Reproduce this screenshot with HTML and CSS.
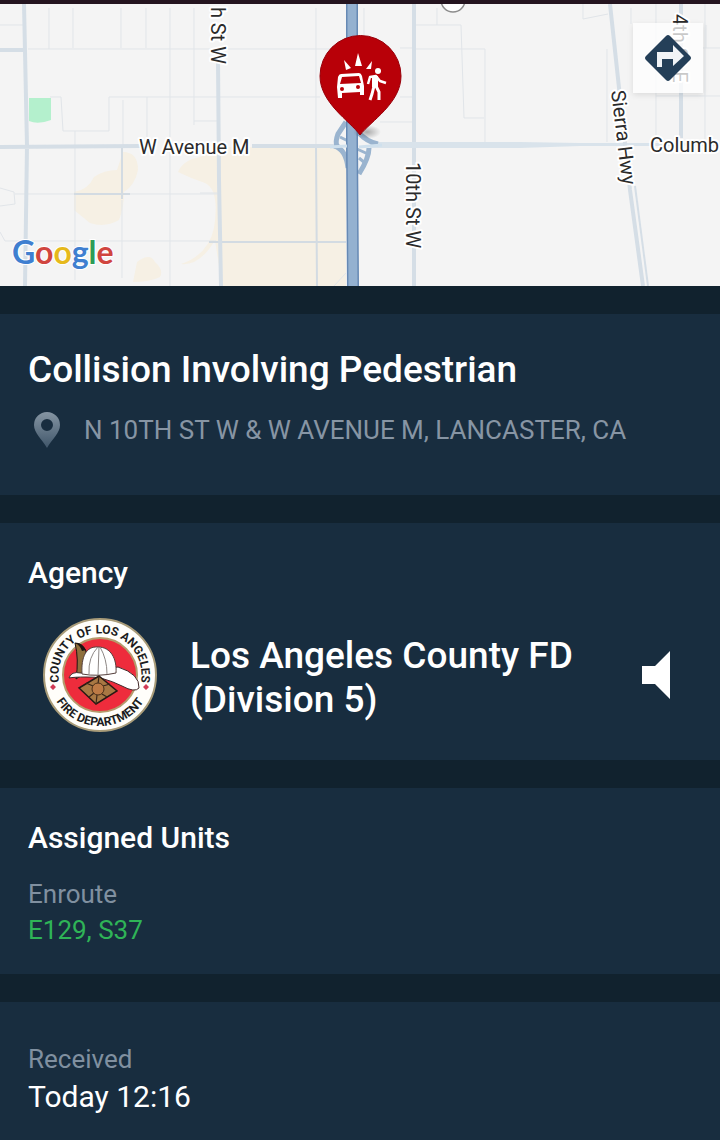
FILE: index.html
```
<!DOCTYPE html>
<html lang="en">
<head>
    <meta charset="UTF-8">
    <meta name="viewport" content="width=device-width, initial-scale=1.0">
    <title>Collision Involving Pedestrian</title>
    <link rel="stylesheet" href="styles.css">
</head>
<body>
    <div class="status-strip"></div>

    <div class="map">
        <svg class="map-canvas" viewBox="0 4 720 282" preserveAspectRatio="xMidYMid slice" role="img" aria-label="Map of the incident">
            <rect y="4" width="720" height="282" fill="#f4f4f4"/>

            <!-- Land areas -->
            <g fill="#f6f0e4">
                <path d="M218 147H341Q346 150 346 165V286H222L215 240Q200 266 181 264Q208 255 214 228Q220 190 205 183Q190 178 178 172Q183 160 200 157Z"/>
                <path d="M123 152Q138 152 138 170Q135 185 124 192Q124 208 119 220Q105 228 90 223L74 210V192Q88 190 94 177Q104 170 117 170Z"/>
                <path d="M137 262Q150 252 155 262Q164 270 160 277Q150 282 133 282Z"/>
            </g>
            <path d="M29 98H51V120Q38 125 29 121Z" fill="#b4f0cd"/>

            <!-- Minor roads -->
            <g fill="none" stroke="#e1e5e9" stroke-width="1">
                <path d="M0 25H24M28 49H346M49 8V49M73 8V48M121 8V48M146 8V48M170 8V286M194 8V125M50 97H61L63 131H109L109 97H320M123 100V146M147 97V145M194 121H218M75 131V280"/>
                <path d="M15 194H218M0 188L14 192L15 204L0 206M0 232L5 241H216M122 200V278M316 8V146M364 8V35M400 48H412M400 97H412M380 122H412M200 193H217M334 286L346 273"/>
                <path d="M415 25H461L464 118H484M415 49H485V142M437 8V25M583 4V19L608 14M607 49V142M631 8V24M656 4V142M705 4V142M703 48H720M656 96H720M706 25V48"/>
            </g>
            <g fill="none" stroke="#d3dbe2" stroke-width="2">
                <path d="M74 194H130M122 148V199M316 146L317 286M209 242H346"/>
            </g>

            <!-- Main roads -->
            <g fill="none" stroke="#d5dee6" stroke-width="4">
                <path d="M24 4L27 146L25 286M0 50H24M0 147L140 146M218 60L219 180L221 286M414 4V286M681 4V138M252 146H340"/>
                <path d="M370 142H520L580 143H720V146H580L520 148H370Z" fill="#d9e3eb" stroke="none"/>
                <path d="M610 4Q619 90 630 190L643 286"/>
                <path d="M635 186L648 286" stroke-width="2"/>
            </g>

            <!-- Freeway and interchange -->
            <g fill="none" stroke="#9ab4cf" stroke-width="5">
                <path d="M346 122L338 134Q335 142 337 146M334 146Q346 149 348 168M358 132Q367 142 378 144M369 148Q369 158 359 174"/>
                <path d="M340 137L350 142M357 149L368 154M359 158L365 163" stroke-width="3"/>
            </g>
            <path d="M352 4V140L353 286" fill="none" stroke="#6689b4" stroke-width="12"/>
            <path d="M352 4V140L353 286" fill="none" stroke="#94b1d0" stroke-width="9"/>
            <path d="M330 147L347 146M359 147L382 145" fill="none" stroke="#cfe0ed" stroke-width="3"/>

            <circle cx="453" cy="0" r="12" fill="#fff" stroke="#8d8d8d" stroke-width="1.5"/>

            <g class="map-label">
                <text x="139" y="154">W Avenue M</text>
                <text x="650" y="152">Columb</text>
                <text transform="translate(211 64) rotate(90)" text-anchor="end">h St W</text>
                <text transform="translate(406 162) rotate(90)">10th St W</text>
                <text transform="translate(611 91) rotate(83)">Sierra Hwy</text>
                <text transform="translate(673 14) rotate(90)">4th St E</text>
            </g>

            <!-- Incident pin -->
            <defs>
                <radialGradient id="pinShadow">
                    <stop offset="0" stop-color="#000" stop-opacity=".3"/>
                    <stop offset="1" stop-color="#000" stop-opacity="0"/>
                </radialGradient>
            </defs>
            <ellipse cx="367" cy="132" rx="14" ry="7" fill="url(#pinShadow)"/>
            <path d="M360 135C350 121 320 103 320 76A40 40 0 0 1 401 76C401 103 371 121 360 135Z" fill="#b80008" stroke="#98000a" stroke-width="1"/>
            <g fill="#fff">
                <path d="M358 53L362 66H355ZM344 60L351 68L346 70ZM372 61L371 69L366 69Z"/>
                <path fill-rule="evenodd" d="M341 74L359 73Q361 73 362 76L364 86V95H360V92L342 93V98H338L337 87L338 77Q339 74 341 74ZM342 77L340 84L361 83L359 76Z"/>
                <circle cx="378" cy="71" r="3"/>
            </g>
            <g fill="none" stroke="#fff" stroke-linejoin="round">
                <path d="M368 84L370 77L376 76L380 81L386 83" stroke-width="2.5"/>
                <path d="M375 76V87" stroke-width="6"/>
                <path d="M374 86L372 94L370 100M376 86L379 92V100" stroke-width="3"/>
            </g>
            <g fill="#b80008"><circle cx="342" cy="89" r="2"/><circle cx="358" cy="87" r="2"/></g>

            <g class="map-logo">
                <text x="12" y="264"><tspan fill="#3f7fd0">G</tspan><tspan fill="#d0453f">o</tspan><tspan fill="#e6b91c">o</tspan><tspan fill="#3f7fd0">g</tspan><tspan fill="#2d9c56">l</tspan><tspan fill="#d0453f">e</tspan></text>
            </g>
        </svg>

        <button class="directions" aria-label="Directions">
            <svg width="48" height="48" viewBox="0 0 48 48">
                <path d="M22 2Q24 0 26 2L46 22Q48 24 46 26L26 46Q24 48 22 46L2 26Q0 24 2 22Z" fill="#243f58"/>
                <path d="M13 33V18H29V11L40 22L29 32V25H18V33Z" fill="#f1f4f7"/>
            </svg>
        </button>
    </div>

    <main class="details">
        <section class="card incident">
            <h1>Collision Involving Pedestrian</h1>
            <p class="address">
                <svg width="26" height="36" viewBox="0 0 26 36" aria-hidden="true">
                    <defs>
                        <linearGradient id="pinFade" x1="0" y1="0" x2="0" y2="1">
                            <stop offset="0" stop-color="#8595a3"/>
                            <stop offset="1" stop-color="#40566a"/>
                        </linearGradient>
                    </defs>
                    <path fill="url(#pinFade)" fill-rule="evenodd" d="M13 0A13 13 0 0 1 26 13C26 21 18 27 13 36C8 27 0 21 0 13A13 13 0 0 1 13 0ZM13 7A6 6 0 1 0 13 19A6 6 0 1 0 13 7Z"/>
                </svg>
                <span>N 10TH ST W &amp; W AVENUE M, LANCASTER, CA</span>
            </p>
        </section>

        <section class="card agency">
            <h2>Agency</h2>
            <div class="agency-row">
                <svg class="seal" width="116" height="116" viewBox="0 0 116 116" role="img" aria-label="County of Los Angeles Fire Department">
                    <defs>
                        <path id="sealTop" d="M19 72A41.5 41.5 0 1 1 97 72"/>
                        <path id="sealBottom" d="M7 58A51 51 0 0 0 109 58"/>
                    </defs>
                    <circle cx="58" cy="58" r="56" fill="#fffefa" stroke="#a99c79" stroke-width="2"/>
                    <circle cx="58" cy="58" r="37" fill="#ee2c3c" stroke="#b59b6c" stroke-width="2"/>
                    <path d="M11 67L14 70L11 73L8 70ZM104 67L107 70L104 73L101 70Z" fill="#d13a55"/>
                    <!-- Helmet -->
                    <path d="M33 26Q40 26 44 34L40 58L34 62Q37 42 33 26Z" fill="#8e6f3c" stroke="#1c1512" stroke-width="1"/>
                    <path d="M33 26Q40 25 44 33L40 34Q38 28 33 26Z" fill="#1c1512"/>
                    <path d="M27 61Q29 54 39 56L76 50Q98 57 97 71Q93 76 80 69Q60 59 44 60Q32 60 27 61Z" fill="#fff" stroke="#43292a" stroke-width="1"/>
                    <path d="M40 57C39 40 44 29 56 30C69 30 75 42 74 56Q56 60 40 57Z" fill="#fff" stroke="#55403d" stroke-width="1"/>
                    <path d="M56 30Q46 40 47 57M57 30L56 58M58 30Q65 42 65 57" fill="none" stroke="#8d8785" stroke-width="1"/>
                    <path d="M57 59L75 74L54 87L37 71Z" fill="#a87843" stroke="#281a13" stroke-width="1.5"/>
                    <path d="M57 59L56 67M54 87L55 78M44 66L51 69M68 67L61 69M47 80L52 76M65 80L60 77" stroke="#3a261a" stroke-width="1.2"/>
                    <circle cx="56" cy="72" r="6" fill="#bd7a45" stroke="#4c3019" stroke-width="1"/>
                    <text class="seal-text"><textPath href="#sealTop" startOffset="50%">COUNTY OF LOS ANGELES</textPath></text>
                    <text class="seal-text"><textPath href="#sealBottom" startOffset="50%">FIRE DEPARTMENT</textPath></text>
                </svg>
                <p class="agency-name">Los Angeles County FD (Division 5)</p>
                <button class="listen" aria-label="Listen">
                    <svg width="28" height="48" viewBox="0 0 28 48"><path d="M0 15H13L28 0V48L13 33H0Z" fill="#fff"/></svg>
                </button>
            </div>
        </section>

        <section class="card units">
            <h2>Assigned Units</h2>
            <p class="label">Enroute</p>
            <p class="unit-list">E129, S37</p>
        </section>

        <section class="card received">
            <p class="label">Received</p>
            <p class="time">Today 12:16</p>
        </section>
    </main>
</body>
</html>
```
FILE: styles.css
```
* {
    box-sizing: border-box;
    margin: 0;
    padding: 0;
}

body {
    font-family: Roboto, sans-serif;
    background: #182d3f;
    color: #fff;
}

h1,
h2 {
    font-weight: 500;
}

button {
    border: none;
    background: none;
    cursor: pointer;
}

svg {
    display: block;
    flex: none;
}

.status-strip {
    height: 4px;
    background: #24141f;
}

/* Map */
.map {
    position: relative;
}

.map-canvas {
    width: 100%;
    height: 282px;
}

.map-label {
    font-size: 20px;
    fill: #2b2b2b;
    stroke: #fff;
    stroke-width: 4px;
    stroke-linejoin: round;
    paint-order: stroke;
}

.map-logo {
    font-family: Lato, sans-serif;
    font-size: 32px;
    font-weight: 700;
    stroke: #fff;
    stroke-width: 2px;
    paint-order: stroke;
}

/* Sits on top of the map */
.directions {
    position: absolute;
    top: 19px;
    right: 17px;
    display: flex;
    align-items: center;
    justify-content: center;
    width: 70px;
    height: 70px;
    background: rgba(255, 255, 255, 0.75);
    box-shadow: 0 2px 6px rgba(0, 0, 0, 0.1);
}

/* Detail cards */
.card {
    padding: 28px;
    border-top: 28px solid #11222e;
}

.incident {
    padding-top: 34px;
    padding-bottom: 45px;
}

h1 {
    font-size: 37px;
    line-height: 44px;
}

.address {
    display: flex;
    align-items: center;
    gap: 24px;
    margin-top: 18px;
    padding-left: 6px;
    font-size: 26px;
    line-height: 40px;
    color: #8795a4;
}

h2 {
    font-size: 30px;
    line-height: 40px;
}

.agency {
    padding-top: 30px;
    padding-bottom: 27px;
}

.agency-row {
    display: flex;
    align-items: center;
    gap: 32px;
    margin-top: 24px;
    padding: 0 22px 0 14px;
}

.agency-name {
    flex: 1;
    padding-top: 6px;
    font-size: 37px;
    font-weight: 500;
    line-height: 44px;
}

.seal-text {
    font-size: 12px;
    font-weight: 700;
    fill: #1b1c20;
    text-anchor: middle;
}

.units {
    padding-top: 30px;
    padding-bottom: 26px;
}

.label {
    font-size: 26px;
    line-height: 36px;
    color: #8090a0;
}

.units .label {
    margin-top: 18px;
}

.unit-list {
    font-size: 26px;
    line-height: 36px;
    color: #2fb457;
}

.received {
    padding-top: 39px;
}

.time {
    font-size: 30px;
    line-height: 40px;
}
```
